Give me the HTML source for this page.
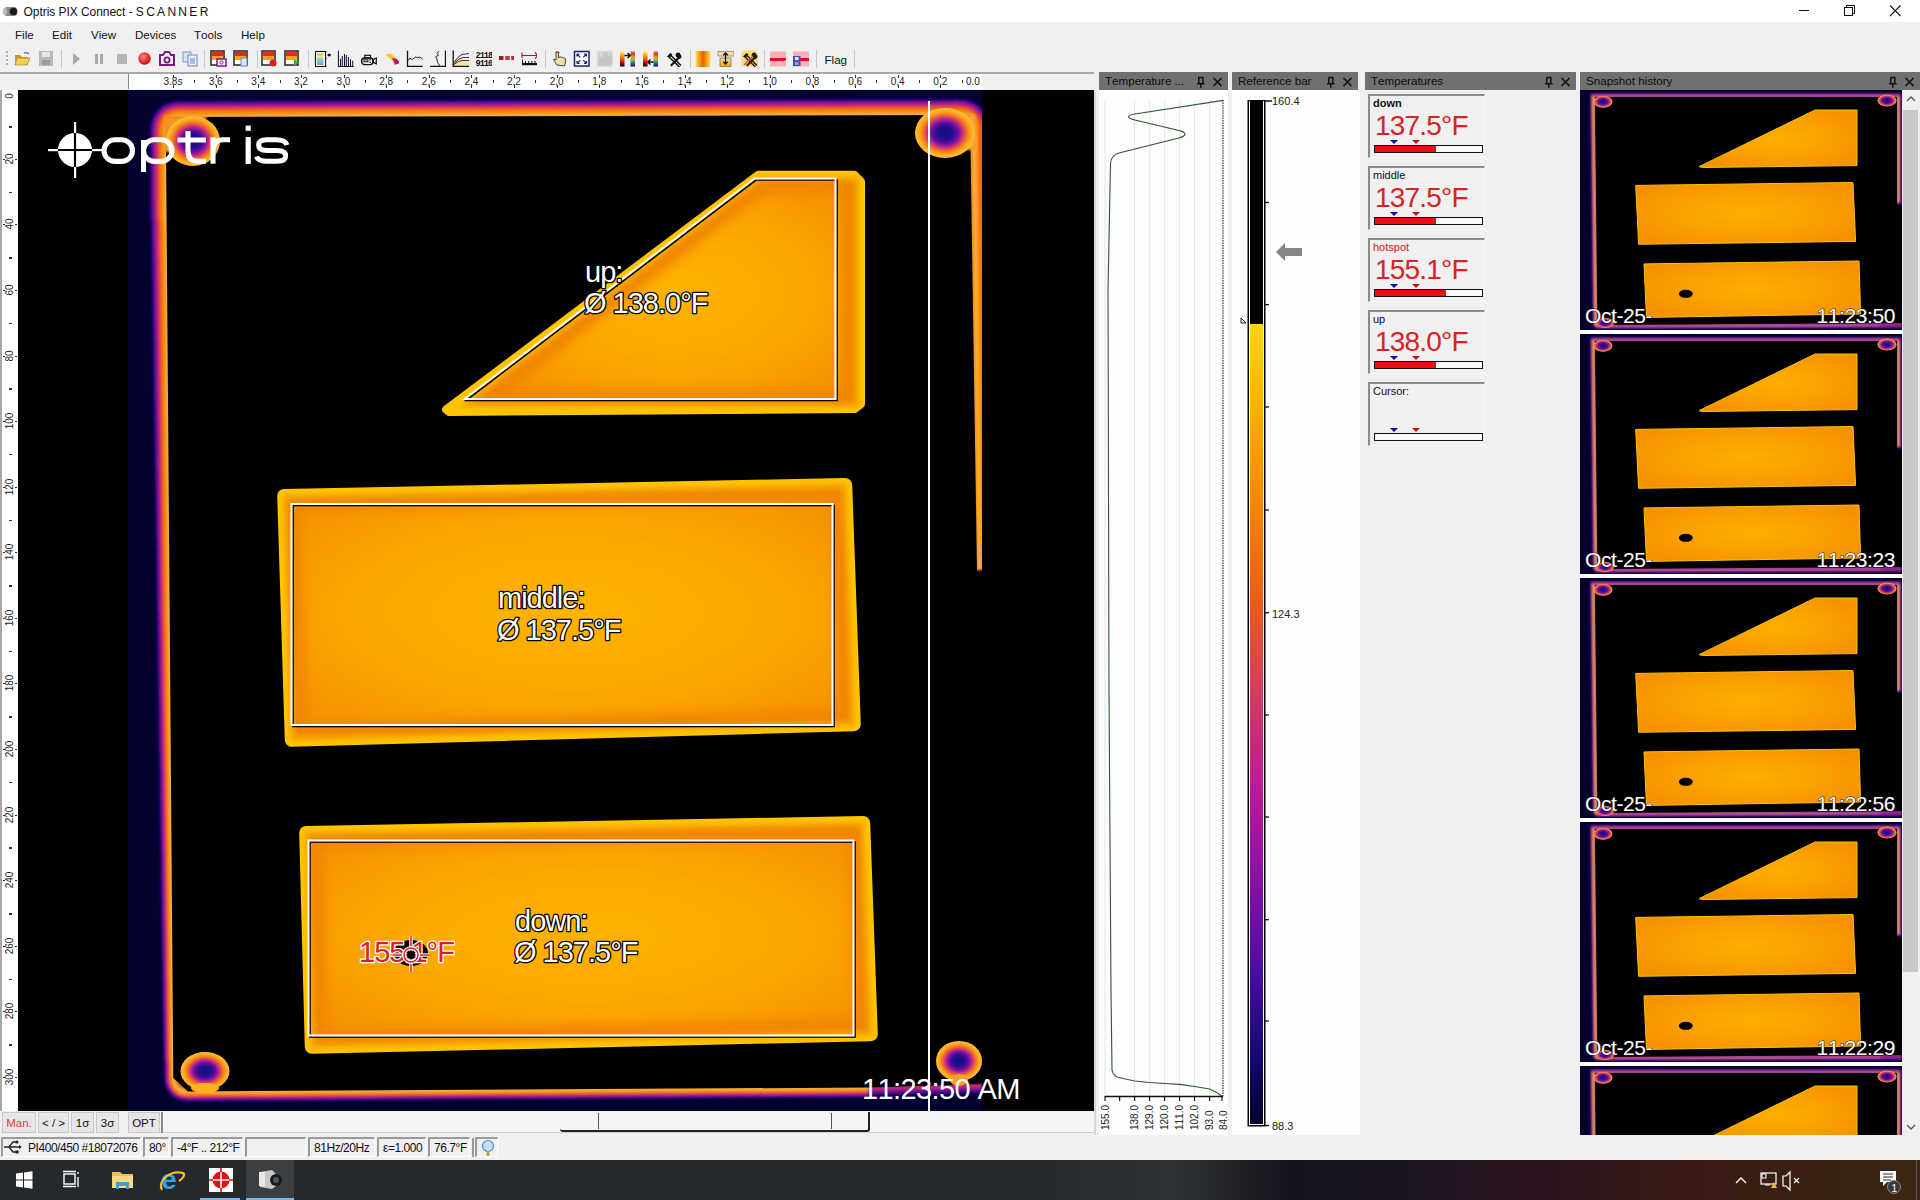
<!DOCTYPE html><html><head><meta charset="utf-8"><style>
*{box-sizing:border-box}
html,body{margin:0;padding:0}
body{width:1920px;height:1200px;overflow:hidden;position:relative;background:#f0f0f0;font-family:"Liberation Sans",sans-serif;color:#000;font-kerning:none}
.a{position:absolute}
.ph{position:absolute;top:72px;height:18px;background:#707070;color:#0d0d0d;font-size:11.6px;white-space:nowrap;overflow:hidden}
.ph .tx{position:absolute;left:6px;top:2px}
.rl{position:absolute;top:76px;font-size:10px;color:#222;white-space:nowrap}
.btn{position:absolute;top:1112px;height:21px;background:#e6e6e6;border:1px solid #c8c8c8;font-size:11.5px;text-align:center;line-height:21px;color:#111}
.sb{position:absolute;top:1137px;height:20px;border-top:2px solid #9a9a9a;border-left:2px solid #9a9a9a;border-right:1px solid #fdfdfd;border-bottom:1px solid #fdfdfd;font-size:12px;letter-spacing:-0.45px;line-height:19px;padding-left:4px;white-space:nowrap;color:#111}
.tbox{position:absolute;left:1368px;width:117px;height:64px;border-top:2px solid #8a8a8a;border-left:2px solid #8a8a8a;border-right:1px solid #fafafa;border-bottom:1px solid #fafafa;background:#f0f0f0}
.tbox .lb{position:absolute;left:3px;top:1px;font-size:11px;color:#111}
.tbox .val{position:absolute;left:5px;top:14px;font-size:28px;color:#d92128;letter-spacing:-0.8px}
.tbox .bar{position:absolute;left:4px;top:49px;width:109px;height:8px;border:1.5px solid #111;background:#f8f8f8}
.tbox .fill{position:absolute;left:0;top:0;height:100%;background:#e81010}
</style></head><body>
<div class="a" style="left:0;top:0;width:1920px;height:22px;background:#fff">
<svg class="a" style="left:2px;top:3px" width="18" height="16"><rect x="2" y="4" width="13" height="9" rx="3" fill="#8a8a8a"/><rect x="1" y="5" width="4" height="7" rx="2" fill="#bbb"/><circle cx="11.5" cy="8.5" r="3.8" fill="#1a1a1a"/></svg>
<div class="a" style="left:23.5px;top:5px;font-size:12px;white-space:nowrap;color:#111;letter-spacing:-0.05px">Optris PIX Connect - <span style="letter-spacing:2.3px">SCANNER</span></div>
<svg class="a" style="left:1780px;top:0" width="140" height="22">
<line x1="19" y1="10.5" x2="29" y2="10.5" stroke="#111" stroke-width="1"/>
<rect x="64.5" y="7.5" width="8" height="8" fill="none" stroke="#111"/><path d="M66.5 7.5V5.5h8v8h-2" fill="none" stroke="#111"/>
<path d="M110 5.5l10.5 10.5M120.5 5.5l-10.5 10.5" stroke="#111" stroke-width="1.1"/>
</svg></div>
<div class="a" style="left:0;top:22px;width:1920px;height:23px;background:#f0f0f0;font-size:11.6px;color:#111">
<span class="a" style="left:15px;top:6px">File</span>
<span class="a" style="left:52px;top:6px">Edit</span>
<span class="a" style="left:91px;top:6px">View</span>
<span class="a" style="left:135px;top:6px">Devices</span>
<span class="a" style="left:194px;top:6px">Tools</span>
<span class="a" style="left:241px;top:6px">Help</span>
</div>
<div class="a" style="left:0;top:45px;width:1094px;height:27px;background:#f0f0f0"></div><div class="a" style="left:6px;top:51px;width:2px;height:16px;background:repeating-linear-gradient(#b0b0b0 0 2px,transparent 2px 4px)"></div><svg class="a" style="left:14px;top:50px" width="17" height="17"><path d="M1 5h5l2 2h6v8H1z" fill="#c99a2e"/><path d="M3 8h13l-3 7H1z" fill="#f3cc5a" stroke="#b58a20" stroke-width="0.8"/><path d="M10 3a4 3 0 0 1 5 1" stroke="#4a6aa0" fill="none" stroke-width="1.2"/></svg><svg class="a" style="left:38px;top:50px" width="17" height="17"><rect x="1" y="1" width="14" height="15" fill="#b8b8b8"/><rect x="4" y="2" width="8" height="5" fill="#e6e6e6"/><rect x="4" y="10" width="8" height="5" fill="#9c9c9c"/></svg><div class="a" style="left:61px;top:50px;width:1px;height:18px;background:#c8c8c8"></div><svg class="a" style="left:70px;top:50px" width="17" height="17"><path d="M3 3l7 6-7 6z" fill="#a9a9a9"/></svg><svg class="a" style="left:92px;top:50px" width="17" height="17"><rect x="3" y="4" width="3" height="10" fill="#a8a8a8"/><rect x="8" y="4" width="3" height="10" fill="#a8a8a8"/></svg><svg class="a" style="left:115px;top:50px" width="17" height="17"><rect x="2" y="4" width="10" height="10" fill="#b4b4b4"/></svg><svg class="a" style="left:137px;top:50px" width="17" height="17"><defs><radialGradient id="rg" cx="40%" cy="35%" r="60%"><stop offset="0" stop-color="#ff8a80"/><stop offset="1" stop-color="#d01010"/></radialGradient></defs><circle cx="7.5" cy="8.5" r="6.2" fill="url(#rg)"/></svg><svg class="a" style="left:158px;top:50px" width="17" height="17"><path d="M2 5h3l2-3h4l2 3h3v10H2z" fill="none" stroke="#7a1a80" stroke-width="2"/><circle cx="9" cy="10" r="2.6" fill="none" stroke="#7a1a80" stroke-width="1.8"/></svg><svg class="a" style="left:182px;top:50px" width="17" height="17"><rect x="1" y="2" width="8" height="10" fill="#d8e4f4" stroke="#7a9ad0"/><rect x="6" y="5" width="9" height="11" fill="#e8f0fa" stroke="#6a8ac8"/><path d="M8 9h5M8 11h5M8 13h5" stroke="#6a8ac8"/></svg><div class="a" style="left:204px;top:50px;width:1px;height:18px;background:#c8c8c8"></div><svg class="a" style="left:210px;top:50px" width="17" height="17"><rect x="1" y="1" width="13" height="14" fill="#fff" stroke="#222" stroke-width="1.5"/><rect x="2" y="2" width="11" height="4" fill="#d83010"/><rect x="2" y="6" width="11" height="4" fill="#f8a020"/><rect x="7" y="9" width="9" height="7" fill="#fff" stroke="#7a1a80" stroke-width="1.5"/><circle cx="11.5" cy="12.5" r="1.6" fill="none" stroke="#7a1a80"/></svg><svg class="a" style="left:233px;top:50px" width="17" height="17"><rect x="1" y="1" width="13" height="14" fill="#fff" stroke="#222" stroke-width="1.5"/><rect x="2" y="2" width="11" height="4" fill="#d83010"/><rect x="2" y="6" width="11" height="4" fill="#f8a020"/><rect x="8" y="8" width="6" height="8" fill="#dde8f6" stroke="#6a8ac8"/></svg><div class="a" style="left:257px;top:50px;width:1px;height:18px;background:#c8c8c8"></div><svg class="a" style="left:261px;top:50px" width="17" height="17"><rect x="1" y="1" width="13" height="14" fill="#fff" stroke="#222" stroke-width="1.5"/><rect x="2" y="2" width="11" height="4" fill="#d83010"/><rect x="2" y="6" width="11" height="4" fill="#f8a020"/><circle cx="12" cy="13" r="3.5" fill="#e02020"/></svg><svg class="a" style="left:284px;top:50px" width="17" height="17"><rect x="1" y="1" width="13" height="14" fill="#fff" stroke="#222" stroke-width="1.5"/><rect x="2" y="2" width="11" height="4" fill="#d83010"/><rect x="2" y="6" width="11" height="4" fill="#f8a020"/><path d="M10 9l5 3.5-5 3.5z" fill="#20c020"/></svg><div class="a" style="left:308px;top:50px;width:1px;height:18px;background:#c8c8c8"></div><svg class="a" style="left:314px;top:50px" width="17" height="17"><defs><linearGradient id="rb" x1="0" y1="0" x2="0" y2="1"><stop offset="0" stop-color="#d8a070"/><stop offset="0.25" stop-color="#f0f080"/><stop offset="0.5" stop-color="#80e0a0"/><stop offset="0.75" stop-color="#80b0f0"/><stop offset="1" stop-color="#b080e0"/></linearGradient></defs><rect x="1.5" y="1.5" width="10" height="15" fill="#fff" stroke="#111" stroke-width="1.1"/><rect x="3" y="3.5" width="6.5" height="11.5" fill="url(#rb)"/><path d="M11.5 8.5H12.6M11.5 1.5H12.6M11.5 16.5H12.6" stroke="#111"/><path d="M13 5L15.5 3V4.2H17V5.8H15.5V7Z" fill="#111"/></svg><svg class="a" style="left:337px;top:50px" width="17" height="17"><path d="M1.4 0.7V16.4M3.5 8.7V16.4M5.3 6V16.4M7.5 4V16.4M9.3 4.9V16.4M11.4 7V16.4M13.5 8.9V16.4M15.7 10.8V16.4M1 16.4H16.7" stroke="#14143a" stroke-width="1.05"/></svg><svg class="a" style="left:360px;top:50px" width="17" height="17"><rect x="1.6" y="8" width="11.5" height="6.6" rx="3" fill="none" stroke="#111" stroke-width="1.4"/><rect x="4.8" y="5.3" width="5.7" height="2.6" fill="none" stroke="#111" stroke-width="1.2"/><path d="M13.2 9.5L16.3 8V13.8L13.2 12.4Z" fill="none" stroke="#111" stroke-width="1.2"/><rect x="3.9" y="9.8" width="4" height="2" fill="none" stroke="#111" stroke-width="1"/><circle cx="10" cy="9.7" r="0.8" fill="#111"/><circle cx="10" cy="12.2" r="0.8" fill="#111"/></svg><svg class="a" style="left:384px;top:50px" width="17" height="17"><defs><filter id="pb"><feGaussianBlur stdDeviation="0.7"/></filter></defs><g filter="url(#pb)"><path d="M1 4.5L7 3.5L12 8.5L9 11Z" fill="#f8c828"/><path d="M8 8L12.5 8.5L15 12.5L11 15Z" fill="#c82050"/><circle cx="13" cy="12" r="2" fill="#a02080"/></g></svg><svg class="a" style="left:406px;top:50px" width="17" height="17"><path d="M1.5 0.7V16.4H16.7" fill="none" stroke="#111" stroke-width="1.3"/><path d="M2.2 10.5L3.8 8.2L6.2 9.6L9.5 7L11.3 7.7L14.2 7L16.7 9.6" fill="none" stroke="#111" stroke-width="0.9"/></svg><svg class="a" style="left:429px;top:50px" width="17" height="17"><path d="M1 16.4H16.5V0.5" fill="none" stroke="#111" stroke-width="1.3"/><path d="M9.7 1.2L8 3.5L9.5 5.2L6.6 6.8L8 9L8.4 12L10.8 16.2" fill="none" stroke="#111" stroke-width="0.9"/></svg><svg class="a" style="left:452px;top:50px" width="17" height="17"><path d="M1.5 10.5Q6 8 10 10L17 10V16H1.5Z" fill="#fbe8a8"/><path d="M1.2 0.5V16.4H17.1" fill="none" stroke="#111" stroke-width="1.3"/><path d="M2 12.5Q6 6 10 4.5L17 3.5M2 13.5Q7 8 11 7.5L17 7.5M2 14.5Q7 10 11 10.5L17 10.5" fill="none" stroke="#222" stroke-width="0.9"/></svg><svg class="a" style="left:475px;top:50px" width="17" height="17"><text x="0.5" y="8" font-size="8.6" font-family="Liberation Mono" font-weight="bold" fill="#111" letter-spacing="-1">2118</text><text x="0.5" y="16" font-size="8.6" font-family="Liberation Mono" font-weight="bold" fill="#111" letter-spacing="-1">9110</text></svg><svg class="a" style="left:497px;top:50px" width="17" height="17"><rect x="2" y="6" width="4.5" height="4" fill="#9a1a2a"/><rect x="8.2" y="6" width="4.5" height="4" fill="#c83a3a"/><rect x="14.3" y="6" width="3.7" height="4" fill="#b02a3a"/></svg><svg class="a" style="left:520px;top:50px" width="17" height="17"><path d="M2 2.5V8M2 5.5H17.5M15 2.5L17.8 5.5L15 8.8" fill="none" stroke="#8a2040" stroke-width="1.1"/><rect x="2" y="13" width="16" height="2.2" fill="#111"/><path d="M2.5 9.5V13M5.5 11V13M8.7 11V13M11.8 11V13M15 11V13M17.6 9.5V13" stroke="#111" stroke-width="1"/></svg><div class="a" style="left:545px;top:50px;width:1px;height:18px;background:#c8c8c8"></div><svg class="a" style="left:551px;top:50px" width="17" height="17"><path d="M6 15c-2-3-4-5-3-6l2 1V3a1.2 1.2 0 0 1 2.4 0v5l1-1c1-.5 2 0 2 .5 1-.5 2 0 2 .5 1-.3 2 .3 2 1v4l-1 3z" fill="#f0dca0" stroke="#333" stroke-width="0.9"/><path d="M4 3a3 3 0 0 1 5 0" fill="none" stroke="#c04040" stroke-width="0.8"/></svg><svg class="a" style="left:573px;top:50px" width="17" height="17"><rect x="1.5" y="1.5" width="14.5" height="14.5" fill="#fff" stroke="#1a2070" stroke-width="1.5"/><path d="M4 4L7.3 7.3M4 4H6.5M4 4V6.5M13.5 4L10.2 7.3M13.5 4H11M13.5 4V6.5M4 13.5L7.3 10.2M4 13.5H6.5M4 13.5V11M13.5 13.5L10.2 10.2M13.5 13.5H11M13.5 13.5V11" stroke="#1a2070" stroke-width="1.2"/></svg><svg class="a" style="left:596px;top:50px" width="17" height="17"><defs><filter id="gb"><feGaussianBlur stdDeviation="0.8"/></filter></defs><g filter="url(#gb)"><rect x="1.5" y="1.5" width="15" height="15" fill="#c4c4c4"/><rect x="3" y="3" width="4" height="4" fill="#dedede"/><rect x="11" y="3" width="3" height="3" fill="#e0d0d0"/></g></svg><svg class="a" style="left:619px;top:50px" width="17" height="17"><defs><linearGradient id="p1" x1="0" y1="0" x2="0" y2="1"><stop offset="0" stop-color="#fff0a0"/><stop offset="0.2" stop-color="#f8c020"/><stop offset="0.55" stop-color="#e85010"/><stop offset="0.8" stop-color="#901010"/><stop offset="1" stop-color="#100010"/></linearGradient><linearGradient id="p2" x1="0" y1="0" x2="0" y2="1"><stop offset="0" stop-color="#f0a0b0"/><stop offset="0.2" stop-color="#d03040"/><stop offset="0.4" stop-color="#f0a020"/><stop offset="0.55" stop-color="#a0c020"/><stop offset="0.75" stop-color="#2080a0"/><stop offset="1" stop-color="#101060"/></linearGradient></defs><rect x="1" y="1" width="4.5" height="15.5" fill="url(#p1)"/><rect x="11.5" y="1" width="4.5" height="15.5" fill="url(#p2)"/><path d="M5.5 5.5H11M8.5 3L11.2 5.5L8.5 8" fill="none" stroke="#111" stroke-width="1.4"/></svg><svg class="a" style="left:642px;top:50px" width="17" height="17"><defs><linearGradient id="p1" x1="0" y1="0" x2="0" y2="1"><stop offset="0" stop-color="#fff0a0"/><stop offset="0.2" stop-color="#f8c020"/><stop offset="0.55" stop-color="#e85010"/><stop offset="0.8" stop-color="#901010"/><stop offset="1" stop-color="#100010"/></linearGradient><linearGradient id="p2" x1="0" y1="0" x2="0" y2="1"><stop offset="0" stop-color="#f0a0b0"/><stop offset="0.2" stop-color="#d03040"/><stop offset="0.4" stop-color="#f0a020"/><stop offset="0.55" stop-color="#a0c020"/><stop offset="0.75" stop-color="#2080a0"/><stop offset="1" stop-color="#101060"/></linearGradient></defs><rect x="1" y="1" width="4.5" height="15.5" fill="url(#p1)"/><rect x="11.5" y="1" width="4.5" height="15.5" fill="url(#p2)"/><path d="M11.5 12H6M8.5 9.5L5.8 12L8.5 14.5" fill="none" stroke="#111" stroke-width="1.4"/></svg><svg class="a" style="left:665px;top:50px" width="17" height="17"><path d="M2 6.5L5.5 3L7.5 4.5L4.5 8Z" fill="#111"/><path d="M5 4.5L16 15.5M4 7L14.5 17" stroke="#111" stroke-width="1.5"/><path d="M15.5 4.5A2.5 2.5 0 1 0 12.5 7.5L5 15L6.5 16.5L14 9A2.5 2.5 0 0 0 16.5 6Z" fill="#111"/></svg><div class="a" style="left:690px;top:50px;width:1px;height:18px;background:#c8c8c8"></div><svg class="a" style="left:694px;top:50px" width="17" height="17"><defs><linearGradient id="og2" x1="0" y1="0" x2="1" y2="0"><stop offset="0" stop-color="#fde070"/><stop offset="0.25" stop-color="#f8a010"/><stop offset="0.5" stop-color="#e86010"/><stop offset="0.75" stop-color="#f8a010"/><stop offset="1" stop-color="#fde070"/></linearGradient><filter id="ob"><feGaussianBlur stdDeviation="0.6"/></filter></defs><rect x="1.5" y="1" width="15" height="16" fill="url(#og2)" filter="url(#ob)"/></svg><svg class="a" style="left:717px;top:50px" width="17" height="17"><rect x="1" y="1.5" width="16" height="4.5" fill="#f4d8a8" stroke="#9a8870" stroke-width="0.8"/><defs><linearGradient id="tr" x1="0" y1="0" x2="0" y2="1"><stop offset="0" stop-color="#f8e890"/><stop offset="1" stop-color="#f0a010"/></linearGradient></defs><rect x="3" y="8" width="11" height="8.5" fill="url(#tr)" stroke="#8a7050" stroke-width="0.8"/><path d="M8.5 3V14M6.3 5.2L8.5 3L10.7 5.2M6.3 11.8L8.5 14L10.7 11.8" fill="none" stroke="#111" stroke-width="1.3"/></svg><svg class="a" style="left:741px;top:50px" width="17" height="17"><defs><filter id="yb"><feGaussianBlur stdDeviation="1.2"/></filter></defs><rect x="0" y="0" width="17" height="17" rx="5" fill="#fbd870" filter="url(#yb)"/><path d="M2 6.5L5.5 3L7.5 4.5L4.5 8Z" fill="#111"/><path d="M5 4.5L16 15.5M4 7L14.5 17" stroke="#3a1a10" stroke-width="1.5"/><path d="M15.5 4.5A2.5 2.5 0 1 0 12.5 7.5L5 15L6.5 16.5L14 9A2.5 2.5 0 0 0 16.5 6Z" fill="#2a1a10"/><path d="M3 15L12 6" stroke="#d05040" stroke-width="1.2"/></svg><div class="a" style="left:764px;top:50px;width:1px;height:18px;background:#c8c8c8"></div><svg class="a" style="left:769px;top:50px" width="17" height="17"><rect x="1" y="1.5" width="16" height="15" fill="#f5b0b8"/><path d="M1 8.5Q2.5 12 4 8.5Q5.5 12 7 8.5Q8.5 12 10 8.5Q11.5 12 13 8.5Q14.5 12 16 8.5V11H1Z" fill="#e01020"/><rect x="1" y="8" width="16" height="2" fill="#e01020"/></svg><svg class="a" style="left:792px;top:50px" width="17" height="17"><rect x="1" y="1.5" width="16" height="15" fill="#f5b0b8"/><rect x="8" y="8" width="9" height="3" fill="#e01020"/><rect x="1" y="6" width="7.5" height="10" fill="#4a52b0"/><rect x="3" y="7" width="3.5" height="3" fill="#e8e8f0"/><rect x="3" y="12" width="3.5" height="3" fill="#9098d8"/></svg><div class="a" style="left:816px;top:50px;width:1px;height:18px;background:#c8c8c8"></div><div class="a" style="left:824.5px;top:53px;font-size:11.6px;color:#111">Flag</div><div class="a" style="left:854px;top:50px;width:1px;height:18px;background:#c8c8c8"></div>
<div class="a" style="left:0;top:72px;width:1094px;height:2px;background:#a8a8a8"></div>
<div class="a" style="left:0;top:74px;width:1094px;height:16px;background:#f0f0f0"></div>
<div class="a" style="left:128px;top:74px;width:854px;height:15px;background:#fff;border-left:1.5px solid #888"></div>
<div class="rl" style="left:161.8px;width:22.4px;text-align:center">3.8s</div><div class="a" style="left:173.0px;top:75px;width:1px;height:3px;background:#333"></div><div class="a" style="left:173.0px;top:85px;width:1px;height:3px;background:#333"></div><div class="a" style="left:194.3px;top:80px;width:1px;height:3px;background:#333"></div><div class="rl" style="left:207.2px;width:16.8px;text-align:center">3,6</div><div class="a" style="left:215.6px;top:75px;width:1px;height:3px;background:#333"></div><div class="a" style="left:215.6px;top:85px;width:1px;height:3px;background:#333"></div><div class="a" style="left:236.9px;top:80px;width:1px;height:3px;background:#333"></div><div class="rl" style="left:249.9px;width:16.8px;text-align:center">3,4</div><div class="a" style="left:258.3px;top:75px;width:1px;height:3px;background:#333"></div><div class="a" style="left:258.3px;top:85px;width:1px;height:3px;background:#333"></div><div class="a" style="left:279.6px;top:80px;width:1px;height:3px;background:#333"></div><div class="rl" style="left:292.5px;width:16.8px;text-align:center">3,2</div><div class="a" style="left:300.9px;top:75px;width:1px;height:3px;background:#333"></div><div class="a" style="left:300.9px;top:85px;width:1px;height:3px;background:#333"></div><div class="a" style="left:322.2px;top:80px;width:1px;height:3px;background:#333"></div><div class="rl" style="left:335.1px;width:16.8px;text-align:center">3,0</div><div class="a" style="left:343.5px;top:75px;width:1px;height:3px;background:#333"></div><div class="a" style="left:343.5px;top:85px;width:1px;height:3px;background:#333"></div><div class="a" style="left:364.8px;top:80px;width:1px;height:3px;background:#333"></div><div class="rl" style="left:377.8px;width:16.8px;text-align:center">2,8</div><div class="a" style="left:386.1px;top:75px;width:1px;height:3px;background:#333"></div><div class="a" style="left:386.1px;top:85px;width:1px;height:3px;background:#333"></div><div class="a" style="left:407.4px;top:80px;width:1px;height:3px;background:#333"></div><div class="rl" style="left:420.4px;width:16.8px;text-align:center">2,6</div><div class="a" style="left:428.8px;top:75px;width:1px;height:3px;background:#333"></div><div class="a" style="left:428.8px;top:85px;width:1px;height:3px;background:#333"></div><div class="a" style="left:450.1px;top:80px;width:1px;height:3px;background:#333"></div><div class="rl" style="left:463.0px;width:16.8px;text-align:center">2,4</div><div class="a" style="left:471.4px;top:75px;width:1px;height:3px;background:#333"></div><div class="a" style="left:471.4px;top:85px;width:1px;height:3px;background:#333"></div><div class="a" style="left:492.7px;top:80px;width:1px;height:3px;background:#333"></div><div class="rl" style="left:505.6px;width:16.8px;text-align:center">2,2</div><div class="a" style="left:514.0px;top:75px;width:1px;height:3px;background:#333"></div><div class="a" style="left:514.0px;top:85px;width:1px;height:3px;background:#333"></div><div class="a" style="left:535.3px;top:80px;width:1px;height:3px;background:#333"></div><div class="rl" style="left:548.3px;width:16.8px;text-align:center">2,0</div><div class="a" style="left:556.7px;top:75px;width:1px;height:3px;background:#333"></div><div class="a" style="left:556.7px;top:85px;width:1px;height:3px;background:#333"></div><div class="a" style="left:578.0px;top:80px;width:1px;height:3px;background:#333"></div><div class="rl" style="left:590.9px;width:16.8px;text-align:center">1,8</div><div class="a" style="left:599.3px;top:75px;width:1px;height:3px;background:#333"></div><div class="a" style="left:599.3px;top:85px;width:1px;height:3px;background:#333"></div><div class="a" style="left:620.6px;top:80px;width:1px;height:3px;background:#333"></div><div class="rl" style="left:633.5px;width:16.8px;text-align:center">1,6</div><div class="a" style="left:641.9px;top:75px;width:1px;height:3px;background:#333"></div><div class="a" style="left:641.9px;top:85px;width:1px;height:3px;background:#333"></div><div class="a" style="left:663.2px;top:80px;width:1px;height:3px;background:#333"></div><div class="rl" style="left:676.2px;width:16.8px;text-align:center">1,4</div><div class="a" style="left:684.6px;top:75px;width:1px;height:3px;background:#333"></div><div class="a" style="left:684.6px;top:85px;width:1px;height:3px;background:#333"></div><div class="a" style="left:705.9px;top:80px;width:1px;height:3px;background:#333"></div><div class="rl" style="left:718.8px;width:16.8px;text-align:center">1,2</div><div class="a" style="left:727.2px;top:75px;width:1px;height:3px;background:#333"></div><div class="a" style="left:727.2px;top:85px;width:1px;height:3px;background:#333"></div><div class="a" style="left:748.5px;top:80px;width:1px;height:3px;background:#333"></div><div class="rl" style="left:761.4px;width:16.8px;text-align:center">1,0</div><div class="a" style="left:769.8px;top:75px;width:1px;height:3px;background:#333"></div><div class="a" style="left:769.8px;top:85px;width:1px;height:3px;background:#333"></div><div class="a" style="left:791.1px;top:80px;width:1px;height:3px;background:#333"></div><div class="rl" style="left:804.1px;width:16.8px;text-align:center">0,8</div><div class="a" style="left:812.5px;top:75px;width:1px;height:3px;background:#333"></div><div class="a" style="left:812.5px;top:85px;width:1px;height:3px;background:#333"></div><div class="a" style="left:833.8px;top:80px;width:1px;height:3px;background:#333"></div><div class="rl" style="left:846.7px;width:16.8px;text-align:center">0,6</div><div class="a" style="left:855.1px;top:75px;width:1px;height:3px;background:#333"></div><div class="a" style="left:855.1px;top:85px;width:1px;height:3px;background:#333"></div><div class="a" style="left:876.4px;top:80px;width:1px;height:3px;background:#333"></div><div class="rl" style="left:889.3px;width:16.8px;text-align:center">0,4</div><div class="a" style="left:897.7px;top:75px;width:1px;height:3px;background:#333"></div><div class="a" style="left:897.7px;top:85px;width:1px;height:3px;background:#333"></div><div class="a" style="left:919.0px;top:80px;width:1px;height:3px;background:#333"></div><div class="rl" style="left:931.9px;width:16.8px;text-align:center">0,2</div><div class="a" style="left:940.3px;top:75px;width:1px;height:3px;background:#333"></div><div class="a" style="left:940.3px;top:85px;width:1px;height:3px;background:#333"></div><div class="a" style="left:961.6px;top:80px;width:1px;height:3px;background:#333"></div><div class="rl" style="left:964.6px;width:16.8px;text-align:center">0.0</div>
<div class="a" style="left:0;top:90px;width:18px;height:1021px;background:#fff;border-left:2.5px solid #a8a8a8"></div>
<div class="a" style="left:-5px;top:90.0px;width:30px;height:12px;font-size:10px;line-height:12px;text-align:center;color:#222;transform:rotate(-90deg)">0</div><div class="a" style="left:9px;top:126.0px;width:3px;height:1.5px;background:#333"></div><div class="a" style="left:-5px;top:152.7px;width:30px;height:12px;font-size:10px;line-height:12px;text-align:center;color:#222;transform:rotate(-90deg)">20</div><div class="a" style="left:3px;top:158.7px;width:2px;height:1px;background:#333"></div><div class="a" style="left:15px;top:158.7px;width:2px;height:1px;background:#333"></div><div class="a" style="left:9px;top:191.5px;width:3px;height:1.5px;background:#333"></div><div class="a" style="left:-5px;top:218.3px;width:30px;height:12px;font-size:10px;line-height:12px;text-align:center;color:#222;transform:rotate(-90deg)">40</div><div class="a" style="left:3px;top:224.3px;width:2px;height:1px;background:#333"></div><div class="a" style="left:15px;top:224.3px;width:2px;height:1px;background:#333"></div><div class="a" style="left:9px;top:257.1px;width:3px;height:1.5px;background:#333"></div><div class="a" style="left:-5px;top:283.9px;width:30px;height:12px;font-size:10px;line-height:12px;text-align:center;color:#222;transform:rotate(-90deg)">60</div><div class="a" style="left:3px;top:289.9px;width:2px;height:1px;background:#333"></div><div class="a" style="left:15px;top:289.9px;width:2px;height:1px;background:#333"></div><div class="a" style="left:9px;top:322.7px;width:3px;height:1.5px;background:#333"></div><div class="a" style="left:-5px;top:349.5px;width:30px;height:12px;font-size:10px;line-height:12px;text-align:center;color:#222;transform:rotate(-90deg)">80</div><div class="a" style="left:3px;top:355.5px;width:2px;height:1px;background:#333"></div><div class="a" style="left:15px;top:355.5px;width:2px;height:1px;background:#333"></div><div class="a" style="left:9px;top:388.3px;width:3px;height:1.5px;background:#333"></div><div class="a" style="left:-5px;top:415.1px;width:30px;height:12px;font-size:10px;line-height:12px;text-align:center;color:#222;transform:rotate(-90deg)">100</div><div class="a" style="left:3px;top:421.1px;width:2px;height:1px;background:#333"></div><div class="a" style="left:15px;top:421.1px;width:2px;height:1px;background:#333"></div><div class="a" style="left:9px;top:453.9px;width:3px;height:1.5px;background:#333"></div><div class="a" style="left:-5px;top:480.7px;width:30px;height:12px;font-size:10px;line-height:12px;text-align:center;color:#222;transform:rotate(-90deg)">120</div><div class="a" style="left:3px;top:486.7px;width:2px;height:1px;background:#333"></div><div class="a" style="left:15px;top:486.7px;width:2px;height:1px;background:#333"></div><div class="a" style="left:9px;top:519.5px;width:3px;height:1.5px;background:#333"></div><div class="a" style="left:-5px;top:546.2px;width:30px;height:12px;font-size:10px;line-height:12px;text-align:center;color:#222;transform:rotate(-90deg)">140</div><div class="a" style="left:3px;top:552.2px;width:2px;height:1px;background:#333"></div><div class="a" style="left:15px;top:552.2px;width:2px;height:1px;background:#333"></div><div class="a" style="left:9px;top:585.0px;width:3px;height:1.5px;background:#333"></div><div class="a" style="left:-5px;top:611.8px;width:30px;height:12px;font-size:10px;line-height:12px;text-align:center;color:#222;transform:rotate(-90deg)">160</div><div class="a" style="left:3px;top:617.8px;width:2px;height:1px;background:#333"></div><div class="a" style="left:15px;top:617.8px;width:2px;height:1px;background:#333"></div><div class="a" style="left:9px;top:650.6px;width:3px;height:1.5px;background:#333"></div><div class="a" style="left:-5px;top:677.4px;width:30px;height:12px;font-size:10px;line-height:12px;text-align:center;color:#222;transform:rotate(-90deg)">180</div><div class="a" style="left:3px;top:683.4px;width:2px;height:1px;background:#333"></div><div class="a" style="left:15px;top:683.4px;width:2px;height:1px;background:#333"></div><div class="a" style="left:9px;top:716.2px;width:3px;height:1.5px;background:#333"></div><div class="a" style="left:-5px;top:743.0px;width:30px;height:12px;font-size:10px;line-height:12px;text-align:center;color:#222;transform:rotate(-90deg)">200</div><div class="a" style="left:3px;top:749.0px;width:2px;height:1px;background:#333"></div><div class="a" style="left:15px;top:749.0px;width:2px;height:1px;background:#333"></div><div class="a" style="left:9px;top:781.8px;width:3px;height:1.5px;background:#333"></div><div class="a" style="left:-5px;top:808.6px;width:30px;height:12px;font-size:10px;line-height:12px;text-align:center;color:#222;transform:rotate(-90deg)">220</div><div class="a" style="left:3px;top:814.6px;width:2px;height:1px;background:#333"></div><div class="a" style="left:15px;top:814.6px;width:2px;height:1px;background:#333"></div><div class="a" style="left:9px;top:847.4px;width:3px;height:1.5px;background:#333"></div><div class="a" style="left:-5px;top:874.2px;width:30px;height:12px;font-size:10px;line-height:12px;text-align:center;color:#222;transform:rotate(-90deg)">240</div><div class="a" style="left:3px;top:880.2px;width:2px;height:1px;background:#333"></div><div class="a" style="left:15px;top:880.2px;width:2px;height:1px;background:#333"></div><div class="a" style="left:9px;top:913.0px;width:3px;height:1.5px;background:#333"></div><div class="a" style="left:-5px;top:939.8px;width:30px;height:12px;font-size:10px;line-height:12px;text-align:center;color:#222;transform:rotate(-90deg)">260</div><div class="a" style="left:3px;top:945.8px;width:2px;height:1px;background:#333"></div><div class="a" style="left:15px;top:945.8px;width:2px;height:1px;background:#333"></div><div class="a" style="left:9px;top:978.6px;width:3px;height:1.5px;background:#333"></div><div class="a" style="left:-5px;top:1005.4px;width:30px;height:12px;font-size:10px;line-height:12px;text-align:center;color:#222;transform:rotate(-90deg)">280</div><div class="a" style="left:3px;top:1011.4px;width:2px;height:1px;background:#333"></div><div class="a" style="left:15px;top:1011.4px;width:2px;height:1px;background:#333"></div><div class="a" style="left:9px;top:1044.2px;width:3px;height:1.5px;background:#333"></div><div class="a" style="left:-5px;top:1071.0px;width:30px;height:12px;font-size:10px;line-height:12px;text-align:center;color:#222;transform:rotate(-90deg)">300</div><div class="a" style="left:3px;top:1077.0px;width:2px;height:1px;background:#333"></div><div class="a" style="left:15px;top:1077.0px;width:2px;height:1px;background:#333"></div>
<svg class="a" style="left:18px;top:90px" width="1076" height="1021" viewBox="18 90 1076 1021">
<defs>
<filter id="bl1" x="-5%" y="-5%" width="110%" height="110%"><feGaussianBlur stdDeviation="1.2"/></filter>
<filter id="bl4" x="-20%" y="-20%" width="140%" height="140%"><feGaussianBlur stdDeviation="6"/></filter>
<filter id="bl2" x="-20%" y="-20%" width="140%" height="140%"><feGaussianBlur stdDeviation="2.5"/></filter>
<filter id="bl05" x="-10%" y="-10%" width="120%" height="120%"><feGaussianBlur stdDeviation="0.6"/></filter>
<clipPath id="cp982"><rect x="18" y="90" width="964" height="1021"/></clipPath>
<radialGradient id="og" cx="50%" cy="50%" r="65%"><stop offset="0" stop-color="#ffb200"/><stop offset="0.5" stop-color="#fdaa00"/><stop offset="1" stop-color="#f59400"/></radialGradient>
<radialGradient id="hole" cx="50%" cy="50%" r="50%"><stop offset="0" stop-color="#1c0a84"/><stop offset="0.25" stop-color="#200a8a"/><stop offset="0.45" stop-color="#7010a4"/><stop offset="0.6" stop-color="#d0307a"/><stop offset="0.74" stop-color="#f27a18"/><stop offset="0.88" stop-color="#ffac24"/><stop offset="1" stop-color="#ffc030"/></radialGradient>
</defs>
<rect x="18" y="90" width="1076" height="1021" fill="#000"/>
<rect x="128" y="90" width="854" height="1021" fill="#03012d"/>
<g clip-path="url(#cp982)"><g filter="url(#bl1)" fill="none" stroke-linejoin="round" stroke-linecap="butt"><path d="M165.8 220 L165.8 131 Q165.8 116.5 180 116.5 L958 114.5 Q974 114.5 974 130 L980 570" stroke="#10065a" stroke-width="34"/><path d="M149.4 200 L162.7 1060 L175.7 1060 L169.4 200 Z" fill="#10065a" stroke="none"/><path d="M870 1088 L188 1092 Q173.5 1092 173.3 1076 L173.2 1040" stroke="#10065a" stroke-width="20"/><path d="M165.8 220 L165.8 131 Q165.8 116.5 180 116.5 L958 114.5 Q974 114.5 974 130 L980 570" stroke="#3a0888" stroke-width="30"/><path d="M151.4 200 L163.7 1060 L175.7 1060 L169.4 200 Z" fill="#3a0888" stroke="none"/><path d="M870 1088 L188 1092 Q173.5 1092 173.3 1076 L173.2 1040" stroke="#3a0888" stroke-width="18"/><path d="M165.8 220 L165.8 131 Q165.8 116.5 180 116.5 L958 114.5 Q974 114.5 974 130 L980 570" stroke="#8a1296" stroke-width="26"/><path d="M153.4 200 L165.2 1060 L175.7 1060 L169.4 200 Z" fill="#8a1296" stroke="none"/><path d="M870 1088 L188 1092 Q173.5 1092 173.3 1076 L173.2 1040" stroke="#8a1296" stroke-width="15"/><path d="M165.8 220 L165.8 131 Q165.8 116.5 180 116.5 L958 114.5 Q974 114.5 974 130 L980 570" stroke="#cc2c68" stroke-width="21"/><path d="M155.9 200 L166.7 1060 L175.7 1060 L169.4 200 Z" fill="#cc2c68" stroke="none"/><path d="M870 1088 L188 1092 Q173.5 1092 173.3 1076 L173.2 1040" stroke="#cc2c68" stroke-width="12"/><path d="M165.8 220 L165.8 131 Q165.8 116.5 180 116.5 L958 114.5 Q974 114.5 974 130 L980 570" stroke="#ee5818" stroke-width="16"/><path d="M158.4 200 L168.2 1060 L175.7 1060 L169.4 200 Z" fill="#ee5818" stroke="none"/><path d="M870 1088 L188 1092 Q173.5 1092 173.3 1076 L173.2 1040" stroke="#ee5818" stroke-width="9"/><path d="M165.8 220 L165.8 131 Q165.8 116.5 180 116.5 L958 114.5 Q974 114.5 974 130 L980 570" stroke="#f58a0c" stroke-width="11"/><path d="M160.9 200 L169.4 1060 L175.7 1060 L169.4 200 Z" fill="#f58a0c" stroke="none"/><path d="M870 1088 L188 1092 Q173.5 1092 173.3 1076 L173.2 1040" stroke="#f58a0c" stroke-width="6.5"/><path d="M165.8 220 L165.8 131 Q165.8 116.5 180 116.5 L958 114.5 Q974 114.5 974 130 L980 570" stroke="#f2b040" stroke-width="3.6"/><path d="M164.6 200 L171.2 1060 L175.7 1060 L169.4 200 Z" fill="#f2b040" stroke="none"/><path d="M870 1088 L188 1092 Q173.5 1092 173.3 1076 L173.2 1040" stroke="#f2b040" stroke-width="3"/><path d="M868 1088 L982 1085.5" stroke="#0e0650" stroke-width="20"/><path d="M868 1088 L982 1085.5" stroke="#3a0a88" stroke-width="14"/><path d="M868 1088 L982 1085.5" stroke="#8a1296" stroke-width="9"/><path d="M868 1088 L982 1085.5" stroke="#c02a70" stroke-width="4"/></g></g>
<path d="M165.8 117 L970 115 L977 572 L982 572 L982 1084 L870 1087.5 L188 1091.5 L173.3 1078 Z" fill="#000"/>
<g filter="url(#bl1)"><path d="M164 116 L208 116 L200 126 L176 152 L165 152 Z" fill="#f89424"/><path d="M925 114 L975 114 L977 150 L960 150 L925 125 Z" fill="#f8a030"/></g>
<g filter="url(#bl05)">
 <ellipse cx="193" cy="141" rx="27" ry="25" fill="url(#hole)"/>
 <ellipse cx="945" cy="133" rx="30" ry="25" fill="url(#hole)"/>
 <ellipse cx="205" cy="1071" rx="24.5" ry="19" fill="url(#hole)"/>
 <ellipse cx="959" cy="1061" rx="23" ry="20" fill="url(#hole)"/>
 <ellipse cx="205" cy="1088" rx="14" ry="5" fill="#ffb020"/>
 <ellipse cx="959" cy="1080" rx="9" ry="6" fill="#f8a020"/>
</g>
<g><path d="M446.1 409.5 L758.3 174.8 L854.3 174.8 L861.0 181.6 L861.0 404.0 L854.6 409.0 L449.3 412.0 Z" fill="#ffc400" stroke="#ffc400" stroke-width="8" stroke-linejoin="round" filter="url(#bl05)"/><path d="M284.2 495.9 L845.2 485.1 L853.8 724.2 L291.8 739.8 Z" fill="#ffc400" stroke="#ffc400" stroke-width="14" stroke-linejoin="round" filter="url(#bl05)"/><path d="M306.2 832.9 L863.2 823.1 L870.8 1034.2 L311.8 1046.8 Z" fill="#ffc400" stroke="#ffc400" stroke-width="14" stroke-linejoin="round" filter="url(#bl05)"/><path d="M459.2 407.0 L759.0 176.8 L859.0 176.8 L859.0 407.0 Z" fill="#f5a000" filter="url(#bl2)"/><path d="M283.2 494.9 L846.2 484.1 L854.8 725.2 L290.8 740.8 Z" fill="#f5a000" filter="url(#bl2)"/><path d="M305.2 831.9 L864.2 822.1 L871.8 1035.1 L310.8 1047.9 Z" fill="#f5a000" filter="url(#bl2)"/><path d="M473.9 402.0 L760.7 181.8 L854.0 181.8 L854.0 402.0 Z" fill="#f08400" filter="url(#bl2)"/><path d="M288.3 499.8 L841.4 489.2 L849.6 720.3 L295.7 735.7 Z" fill="#f08400" filter="url(#bl2)"/><path d="M310.3 836.8 L859.4 827.2 L866.6 1030.3 L315.7 1042.8 Z" fill="#f08400" filter="url(#bl2)"/><path d="M506.3 391.0 L764.5 192.8 L843.0 192.8 L843.0 391.0 Z" fill="url(#og)" filter="url(#bl4)"/><path d="M299.7 510.6 L830.8 500.4 L838.2 709.6 L306.3 724.4 Z" fill="url(#og)" filter="url(#bl4)"/><path d="M321.6 847.6 L848.8 838.4 L855.2 1019.5 L326.4 1031.5 Z" fill="url(#og)" filter="url(#bl4)"/></g>
<g fill="none" stroke-linejoin="miter">
 <path d="M466 400.5 L756 180 L837 180 L837 400.5 Z" stroke="#000" stroke-width="1.6"/>
 <path d="M464.5 399 L754.5 178.5 L835.5 178.5 L835.5 399 Z" stroke="#fff" stroke-width="2"/>
 <rect x="293" y="505.5" width="541" height="221" stroke="#000" stroke-width="1.6"/>
 <rect x="291.5" y="504" width="541" height="221" stroke="#fff" stroke-width="2"/>
 <rect x="310" y="842" width="545" height="195" stroke="#000" stroke-width="1.6"/>
 <rect x="308.5" y="840.5" width="545" height="195" stroke="#fff" stroke-width="2"/>
</g>
<line x1="929" y1="101" x2="929" y2="1111" stroke="#fff" stroke-width="2"/>
<g font-family="Liberation Sans" font-size="29" fill="#fff" stroke="#000" stroke-width="2.6" paint-order="stroke" stroke-linejoin="round" letter-spacing="-1">
 <text x="585" y="282">up:</text>
 <text x="584" y="313">&#216; 138.0&#176;F</text>
 <text x="498" y="608">middle:</text>
 <text x="497" y="640">&#216; 137.5&#176;F</text>
 <text x="515" y="931">down:</text>
 <text x="514" y="962">&#216; 137.5&#176;F</text>
 <text x="862" y="1099" stroke="none" letter-spacing="-0.6">11:23:50 AM</text>
</g>
<ellipse cx="411" cy="953" rx="17" ry="13" fill="#000" filter="url(#bl05)"/>
<text x="359" y="962" font-family="Liberation Sans" font-size="29" fill="#d8202a" stroke="#fff" stroke-width="2.4" paint-order="stroke" letter-spacing="-1">155.1&#176;F</text>
<g stroke="#fff" stroke-width="3.5"><line x1="411" y1="936" x2="411" y2="972"/><line x1="393" y1="955" x2="429" y2="955"/></g>
<g stroke="#d8202a" stroke-width="1.5"><line x1="411" y1="936" x2="411" y2="972"/><line x1="393" y1="955" x2="429" y2="955"/></g>
<circle cx="411" cy="955" r="7" fill="none" stroke="#fff" stroke-width="4"/>
<circle cx="411" cy="955" r="7" fill="none" stroke="#d8202a" stroke-width="1.5"/>
<circle cx="411" cy="955" r="4" fill="#000"/>
<g fill="#fff">
 <circle cx="75" cy="150" r="17"/>
 <rect x="48" y="149" width="55" height="2.2"/>
 <rect x="74" y="122" width="2.2" height="56"/>
</g>
<g stroke="#000" stroke-width="2.2"><line x1="58" y1="150" x2="92" y2="150"/><line x1="75" y1="133" x2="75" y2="167"/></g>
<g fill="none" stroke="#fff" stroke-width="5.1">
 <rect x="104" y="139.7" width="28.5" height="21.7" rx="11" ry="10.8"/>
 <rect x="143.5" y="139.7" width="28.5" height="21.7" rx="11" ry="10.8"/>
 <path d="M143.5 140V172"/>
 <path d="M188 131V151Q188 161.3 198 161.3H206M177.5 140H206"/>
 <path d="M213 137.3V163.7M213 152Q213 139.7 223 139.7H230"/>
 <path d="M287 145Q285.5 139.7 276 139.7H267Q258.7 139.7 258.7 145Q258.7 150.5 267 150.5H277Q285.6 150.5 285.6 156Q285.6 161.3 277 161.3H267Q258 161.3 256.5 156.5"/>
</g>
<rect x="245.6" y="137.1" width="5.2" height="26.8" fill="#fff"/><rect x="245.6" y="125.6" width="5.2" height="5.2" fill="#fff"/>
</svg>
<div class="a" style="left:0;top:1111px;width:1094px;height:24px;background:#f0f0f0"></div>
<div class="btn" style="left:2px;width:34px;color:#e04040">Man.</div>
<div class="btn" style="left:38px;width:31px;color:#111">&lt; / &gt;</div>
<div class="btn" style="left:71px;width:23px;color:#111">1&#963;</div>
<div class="btn" style="left:96px;width:23px;color:#111">3&#963;</div>
<div class="btn" style="left:128px;width:32px;color:#111">OPT</div>
<div class="a" style="left:161px;top:1112px;width:2px;height:21px;background:#8a8a8a"></div>
<div class="a" style="left:163px;top:1112px;width:931px;height:21px;background:#f4f4f4;border-bottom:1px solid #d0d0d0"></div>
<div class="a" style="left:560px;top:1112px;width:310px;height:20px;border-bottom:2px solid #222;border-right:2px solid #222;border-radius:0 0 3px 3px"></div>
<div class="a" style="left:598px;top:1113px;width:1px;height:16px;background:#555"></div><div class="a" style="left:831px;top:1113px;width:1px;height:16px;background:#555"></div>
<div class="a" style="left:1094px;top:90px;width:2px;height:1045px;background:#d8d8d8"></div>
<div class="a" style="left:0;top:1135px;width:1920px;height:25px;background:#f0f0f0"></div>
<div class="sb" style="left:1px;width:140px;padding-left:25px">PI400/450 #18072076</div>
<svg class="a" style="left:3px;top:1139px" width="20" height="16"><path d="M1 8h15M6 8l4-5h3M6 8l4 5h3" fill="none" stroke="#222" stroke-width="1.3"/><circle cx="14" cy="3" r="1.5" fill="#222"/><rect x="12.5" y="11.5" width="3" height="3" fill="#222"/><path d="M16 6l3 2-3 2z" fill="#222"/></svg>
<div class="sb" style="left:143px;width:26px">80&#176;</div>
<div class="sb" style="left:171px;width:72px">-4&#176;F .. 212&#176;F</div>
<div class="sb" style="left:245px;width:61px"></div>
<div class="sb" style="left:308px;width:67px">81Hz/20Hz</div>
<div class="sb" style="left:377px;width:49px">&#949;=1.000</div>
<div class="sb" style="left:428px;width:42px">76.7&#176;F</div>
<div class="a" style="left:472px;top:1138px;width:2px;height:19px;background:#999"></div>
<div class="sb" style="left:475px;width:23px"></div>
<svg class="a" style="left:478px;top:1139px" width="18" height="18"><circle cx="10" cy="7" r="5.5" fill="#bfe0f8" stroke="#4a8ab8" stroke-width="1.2"/><rect x="8.5" y="12" width="3" height="5" fill="#c0a040"/></svg>
<div class="a" style="left:0;top:1160px;width:1920px;height:40px;background:linear-gradient(90deg,#25292c 0%,#262a2d 55%,#2f3334 61%,#14141c 67%,#1a1420 73%,#2a1420 80%,#3a1a14 88%,#3a2212 96%,#3a2814 100%)"></div>
<svg class="a" style="left:0;top:1160px" width="320" height="40">
<path d="M16 13.5l7-1v7h-7zM24 12.4l8.5-1.2v8.3H24zM16 20.5h7v7l-7-1zM24 20.5h8.5v8.3L24 27.6z" fill="#fff"/>
<rect x="64" y="14" width="11" height="10" fill="none" stroke="#fff" stroke-width="1.4"/><path d="M63 11.5h13M63 26.5h13M78 12v2M78 17v10" stroke="#fff" stroke-width="1.3"/>
<path d="M112 12h8l2 2h11v13h-21z" fill="#e8c060"/><rect x="112" y="16" width="21" height="12" fill="#f8da80"/><path d="M116 29v-7h13v7h-3v-3h-7v3z" fill="#3aa0d8"/>
<text x="161" y="29" font-family="Liberation Sans" font-size="28" font-weight="bold" fill="#2ea6e6">e</text><path d="M162 30c-5-9 8-20 21-17c3 2-1 6-4 8" fill="none" stroke="#f0c030" stroke-width="2.2"/>
<rect x="209" y="8" width="24" height="24" fill="#fff"/><circle cx="221" cy="20" r="8.5" fill="#e01010"/><path d="M209 20h24M221 8v24" stroke="#e01010" stroke-width="1.6"/><path d="M213 20h16M221 12v16" stroke="#fff" stroke-width="1.6"/>
<rect x="246" y="0" width="48" height="40" fill="#3c3f42"/><rect x="200" y="38" width="40" height="2" fill="#76b9ed"/><rect x="246" y="38" width="48" height="2" fill="#76b9ed"/>
<path d="M260 12l12-2 4 4v12l-4 3-12-2z" fill="#c8c8c8"/><rect x="259" y="12" width="6" height="14" fill="#e8e8e8"/><circle cx="276" cy="20" r="6" fill="#1a1a1a"/><circle cx="276" cy="20" r="3" fill="#555"/>
</svg>
<svg class="a" style="left:1720px;top:1160px" width="200" height="40">
<path d="M16 23l5-5 5 5" fill="none" stroke="#fff" stroke-width="1.3"/>
<rect x="41" y="13" width="15" height="11" fill="none" stroke="#fff" stroke-width="1.2"/><rect x="42" y="14" width="4" height="4" fill="none" stroke="#fff"/><path d="M45 25h5" stroke="#fff"/><path d="M51 28l3-6 3 6z" fill="#f0c020"/>
<path d="M63 16h3l4-4v18l-4-4h-3z" fill="none" stroke="#fff" stroke-width="1.2"/><path d="M74 18l5 5M79 18l-5 5" stroke="#fff" stroke-width="1.2"/>
<path d="M160 11h16v11h-9l-4 4v-4h-3z" fill="#fff"/><path d="M163 14h10M163 17h10M163 20h8" stroke="#222" stroke-width="1"/>
<circle cx="174" cy="27" r="6.5" fill="#3a3a3a" stroke="#888"/><text x="171.5" y="31.5" font-size="10" font-family="Liberation Sans" fill="#fff">1</text>
<rect x="196" y="0" width="1" height="40" fill="#555"/>
</svg>
<div class="a" style="left:1096px;top:72px;width:824px;height:1063px;background:#f0f0f0"></div>
<div class="ph" style="left:1099px;width:129px"><span class="tx">Temperature ...</span></div>
<svg class="a" style="left:1196px;top:73px" width="32" height="16"><path d="M2.8 4V10.3M6.8 4V10.3M2.2 4.6H7.4M1 10.8H8.6M4.8 10.8V14.8" stroke="#111" stroke-width="1.5" fill="none"/><path d="M17.5 5l8 8M25.5 5l-8 8" stroke="#111" stroke-width="1.6"/></svg>
<div class="ph" style="left:1232px;width:126px"><span class="tx">Reference bar</span></div>
<svg class="a" style="left:1326px;top:73px" width="32" height="16"><path d="M2.8 4V10.3M6.8 4V10.3M2.2 4.6H7.4M1 10.8H8.6M4.8 10.8V14.8" stroke="#111" stroke-width="1.5" fill="none"/><path d="M17.5 5l8 8M25.5 5l-8 8" stroke="#111" stroke-width="1.6"/></svg>
<div class="ph" style="left:1365px;width:211px"><span class="tx">Temperatures</span></div>
<svg class="a" style="left:1544px;top:73px" width="32" height="16"><path d="M2.8 4V10.3M6.8 4V10.3M2.2 4.6H7.4M1 10.8H8.6M4.8 10.8V14.8" stroke="#111" stroke-width="1.5" fill="none"/><path d="M17.5 5l8 8M25.5 5l-8 8" stroke="#111" stroke-width="1.6"/></svg>
<div class="ph" style="left:1580px;width:340px"><span class="tx">Snapshot history</span></div>
<svg class="a" style="left:1888px;top:73px" width="32" height="16"><path d="M2.8 4V10.3M6.8 4V10.3M2.2 4.6H7.4M1 10.8H8.6M4.8 10.8V14.8" stroke="#111" stroke-width="1.5" fill="none"/><path d="M17.5 5l8 8M25.5 5l-8 8" stroke="#111" stroke-width="1.6"/></svg>
<div class="a" style="left:1099px;top:90px;width:129px;height:1045px;background:#fdfdfd"></div>
<svg class="a" style="left:1099px;top:90px" width="129" height="1045"><line x1="6" y1="10" x2="6" y2="1006" stroke="#e6e6e6" stroke-width="1"/><line x1="35.6" y1="10" x2="35.6" y2="1006" stroke="#e6e6e6" stroke-width="1"/><line x1="50.6" y1="10" x2="50.6" y2="1006" stroke="#e6e6e6" stroke-width="1"/><line x1="65.6" y1="10" x2="65.6" y2="1006" stroke="#e6e6e6" stroke-width="1"/><line x1="80.6" y1="10" x2="80.6" y2="1006" stroke="#e6e6e6" stroke-width="1"/><line x1="95.6" y1="10" x2="95.6" y2="1006" stroke="#e6e6e6" stroke-width="1"/><line x1="110.6" y1="10" x2="110.6" y2="1006" stroke="#e6e6e6" stroke-width="1"/><line x1="124" y1="10" x2="124" y2="1006" stroke="#111" stroke-width="1" stroke-dasharray="1.5 1"/><path d="M124 10.4 L36 24 Q23 26.3 36 30 L82 41 Q91 44.5 80 48 L20 63 Q12.5 65 11.5 73 L9 200 L10 600 L12 900 L13 980 Q14 987 22 988 L35.6 991 L50.6 992.5 L65.6 993.5 L80.6 994.4 L95.6 996.5 L110.6 999 Q118 1002 124 1007" fill="none" stroke="#2a5a2a" stroke-width="1.1"/><path d="M6 1006.5H124" stroke="#111" stroke-width="1.5"/><line x1="6" y1="1006" x2="6" y2="1011" stroke="#111" stroke-width="1.2"/><line x1="20.6" y1="1006" x2="20.6" y2="1011" stroke="#111" stroke-width="1.2"/><line x1="35.6" y1="1006" x2="35.6" y2="1011" stroke="#111" stroke-width="1.2"/><line x1="50.6" y1="1006" x2="50.6" y2="1011" stroke="#111" stroke-width="1.2"/><line x1="65.6" y1="1006" x2="65.6" y2="1011" stroke="#111" stroke-width="1.2"/><line x1="80.6" y1="1006" x2="80.6" y2="1011" stroke="#111" stroke-width="1.2"/><line x1="95.6" y1="1006" x2="95.6" y2="1011" stroke="#111" stroke-width="1.2"/><line x1="110.6" y1="1006" x2="110.6" y2="1011" stroke="#111" stroke-width="1.2"/><line x1="123" y1="1006" x2="123" y2="1011" stroke="#111" stroke-width="1.2"/><text transform="translate(9.5,1040) rotate(-90)" font-family="Liberation Sans" font-size="10" fill="#222" text-anchor="start" style="font-kerning:none">155.0</text><text transform="translate(39.1,1040) rotate(-90)" font-family="Liberation Sans" font-size="10" fill="#222" text-anchor="start" style="font-kerning:none">138.0</text><text transform="translate(54.1,1040) rotate(-90)" font-family="Liberation Sans" font-size="10" fill="#222" text-anchor="start" style="font-kerning:none">129.0</text><text transform="translate(69.1,1040) rotate(-90)" font-family="Liberation Sans" font-size="10" fill="#222" text-anchor="start" style="font-kerning:none">120.0</text><text transform="translate(84.1,1040) rotate(-90)" font-family="Liberation Sans" font-size="10" fill="#222" text-anchor="start" style="font-kerning:none">111.0</text><text transform="translate(99.1,1040) rotate(-90)" font-family="Liberation Sans" font-size="10" fill="#222" text-anchor="start" style="font-kerning:none">102.0</text><text transform="translate(114.1,1040) rotate(-90)" font-family="Liberation Sans" font-size="10" fill="#222" text-anchor="start" style="font-kerning:none">93.0</text><text transform="translate(127.5,1040) rotate(-90)" font-family="Liberation Sans" font-size="10" fill="#222" text-anchor="start" style="font-kerning:none">84.0</text></svg>
<div class="a" style="left:1232px;top:90px;width:128px;height:1045px;background:#fdfdfd"></div>
<svg class="a" style="left:1232px;top:90px" width="128" height="1045"><defs><linearGradient id="iron" x1="0" y1="0" x2="0" y2="1"><stop offset="0" stop-color="#000"/><stop offset="0.2178" stop-color="#000"/><stop offset="0.2179" stop-color="#ffd418"/><stop offset="0.30" stop-color="#ffb000"/><stop offset="0.40" stop-color="#fb8200"/><stop offset="0.49" stop-color="#ee5a18"/><stop offset="0.58" stop-color="#d63a60"/><stop offset="0.67" stop-color="#c0189a"/><stop offset="0.76" stop-color="#8a10a8"/><stop offset="0.85" stop-color="#4a0ea0"/><stop offset="0.93" stop-color="#160878"/><stop offset="1" stop-color="#04002c"/></linearGradient></defs><rect x="15.5" y="10" width="18" height="1026.5" fill="#000"/><rect x="17" y="11" width="15" height="1024" fill="#fff"/><rect x="18" y="11" width="13" height="1023" fill="url(#iron)"/><path d="M33 11h7" stroke="#111" stroke-width="1.5"/><path d="M33 112.5h4" stroke="#111" stroke-width="1.3"/><path d="M33 214.6h4" stroke="#111" stroke-width="1.3"/><path d="M33 317h4" stroke="#111" stroke-width="1.3"/><path d="M33 420h4" stroke="#111" stroke-width="1.3"/><path d="M33 522.7h4" stroke="#111" stroke-width="1.3"/><path d="M33 625h4" stroke="#111" stroke-width="1.3"/><path d="M33 727h4" stroke="#111" stroke-width="1.3"/><path d="M33 829.7h4" stroke="#111" stroke-width="1.3"/><path d="M33 931h4" stroke="#111" stroke-width="1.3"/><path d="M33 1035.5h4" stroke="#111" stroke-width="1.3"/><text x="40" y="15" font-family="Liberation Sans" font-size="11" fill="#222">160.4</text><text x="40" y="528" font-family="Liberation Sans" font-size="11" fill="#222">124.3</text><text x="40" y="1040" font-family="Liberation Sans" font-size="11" fill="#222">88.3</text><path d="M44 162l9-9v5h17v8H53v5z" fill="#858585"/><path d="M9 228l5 5h-5z" fill="none" stroke="#222" stroke-width="1"/></svg>
<div class="tbox" style="top:94px"><div class="lb" style="color:#111;font-weight:bold">down</div><div class="val">137.5&#176;F</div><div class="bar"><div class="fill" style="width:57%"></div></div><svg class="a" style="left:20px;top:44px" width="40" height="6"><path d="M0 0h8l-4 4z" fill="#1010a0"/><path d="M22 0h8l-4 4z" fill="#c02020"/></svg></div>
<div class="tbox" style="top:166px"><div class="lb" style="color:#111;font-weight:normal">middle</div><div class="val">137.5&#176;F</div><div class="bar"><div class="fill" style="width:57%"></div></div><svg class="a" style="left:20px;top:44px" width="40" height="6"><path d="M0 0h8l-4 4z" fill="#1010a0"/><path d="M22 0h8l-4 4z" fill="#c02020"/></svg></div>
<div class="tbox" style="top:238px"><div class="lb" style="color:#d02020;font-weight:normal">hotspot</div><div class="val">155.1&#176;F</div><div class="bar"><div class="fill" style="width:66%"></div></div><svg class="a" style="left:20px;top:44px" width="40" height="6"><path d="M0 0h8l-4 4z" fill="#1010a0"/><path d="M22 0h8l-4 4z" fill="#c02020"/></svg></div>
<div class="tbox" style="top:310px"><div class="lb" style="color:#111;font-weight:normal">up</div><div class="val">138.0&#176;F</div><div class="bar"><div class="fill" style="width:57%"></div></div><svg class="a" style="left:20px;top:44px" width="40" height="6"><path d="M0 0h8l-4 4z" fill="#1010a0"/><path d="M22 0h8l-4 4z" fill="#c02020"/></svg></div>
<div class="tbox" style="top:382px"><div class="lb" style="color:#111;font-weight:normal">Cursor:</div><div class="val"></div><div class="bar"><div class="fill" style="width:0%"></div></div><svg class="a" style="left:20px;top:44px" width="40" height="6"><path d="M0 0h8l-4 4z" fill="#1010a0"/><path d="M22 0h8l-4 4z" fill="#c02020"/></svg></div>
<div class="a" style="left:1580px;top:90px;width:322px;height:1045px;background:#fff"></div>
<svg width="0" height="0" style="position:absolute"><defs>
<filter id="tbl" x="-5%" y="-5%" width="110%" height="110%"><feGaussianBlur stdDeviation="0.8"/></filter>
<radialGradient id="tog" cx="50%" cy="50%" r="60%"><stop offset="0" stop-color="#ffb000"/><stop offset="1" stop-color="#f59200"/></radialGradient>
<radialGradient id="thole" cx="50%" cy="50%" r="50%"><stop offset="0" stop-color="#1a0a80"/><stop offset="0.5" stop-color="#5010a0"/><stop offset="0.75" stop-color="#e04060"/><stop offset="1" stop-color="#ffb020"/></radialGradient>
<g id="thumb">
<rect x="0" y="0" width="322" height="240" fill="#04022c"/>
<g filter="url(#tbl)" fill="none">
<path d="M15.5 236 L13 6 L318.5 6 L318.5 114 M15.5 236 L322 235" stroke="#3a0c8a" stroke-width="6"/>
<path d="M15.5 236 L13 6 L318.5 6 L318.5 114 M15.5 236 L322 235" stroke="#a02890" stroke-width="3.5"/>
<path d="M13.5 7 L16 236 M318 7 L318 112" stroke="#f8a040" stroke-width="2.5"/>
<path d="M13 6 L318.5 6 M15.5 236 L300 235" stroke="#e07a90" stroke-width="1.2"/>
</g>
<path d="M15 7 L317 7 L317 114 L322 118 L322 233 L17.5 235 Z" fill="#000"/>
<ellipse cx="23" cy="11.7" rx="9.5" ry="6" fill="url(#thole)"/>
<ellipse cx="307" cy="10.6" rx="9.5" ry="6" fill="url(#thole)"/>
<ellipse cx="25" cy="233" rx="9" ry="5" fill="url(#thole)"/>
<path d="M119 76.7 L235 20 L277 20 L277 75.6 L123 77.5 Z" fill="url(#tog)" stroke="#ffc000" stroke-width="1"/>
<path d="M55.7 95.4 L273 92.5 L275.6 151.4 L58.6 154.3 Z" fill="url(#tog)" stroke="#ffc000" stroke-width="1"/>
<path d="M64 173.9 L279 171 L280.6 224 L66.5 227.4 Z" fill="url(#tog)" stroke="#ffc000" stroke-width="1"/>
<ellipse cx="105.8" cy="203.8" rx="7" ry="4" fill="#000"/>
</g></defs></svg>
<svg class="a" style="left:1580px;top:90px" width="322" height="240" viewBox="0 0 322 240" preserveAspectRatio="xMinYMin slice"><use href="#thumb"/></svg><svg class="a" style="left:1580px;top:334px" width="322" height="240" viewBox="0 0 322 240" preserveAspectRatio="xMinYMin slice"><use href="#thumb"/></svg><svg class="a" style="left:1580px;top:578px" width="322" height="240" viewBox="0 0 322 240" preserveAspectRatio="xMinYMin slice"><use href="#thumb"/></svg><svg class="a" style="left:1580px;top:822px" width="322" height="240" viewBox="0 0 322 240" preserveAspectRatio="xMinYMin slice"><use href="#thumb"/></svg><svg class="a" style="left:1580px;top:1066px" width="322" height="69" viewBox="0 0 322 240" preserveAspectRatio="xMinYMin slice"><use href="#thumb"/></svg>
<svg class="a" style="left:1580px;top:300px" width="322" height="30"><g font-family="Liberation Sans" font-size="21" fill="#fff" stroke="#1a1010" stroke-width="1" paint-order="stroke"><text x="5" y="23.2" letter-spacing="-0.4">Oct-25-</text><text x="315" y="23.2" text-anchor="end" letter-spacing="-0.4">11:23:50</text></g></svg>
<svg class="a" style="left:1580px;top:544px" width="322" height="30"><g font-family="Liberation Sans" font-size="21" fill="#fff" stroke="#1a1010" stroke-width="1" paint-order="stroke"><text x="5" y="23.2" letter-spacing="-0.4">Oct-25-</text><text x="315" y="23.2" text-anchor="end" letter-spacing="-0.4">11:23:23</text></g></svg>
<svg class="a" style="left:1580px;top:788px" width="322" height="30"><g font-family="Liberation Sans" font-size="21" fill="#fff" stroke="#1a1010" stroke-width="1" paint-order="stroke"><text x="5" y="23.2" letter-spacing="-0.4">Oct-25-</text><text x="315" y="23.2" text-anchor="end" letter-spacing="-0.4">11:22:56</text></g></svg>
<svg class="a" style="left:1580px;top:1032px" width="322" height="30"><g font-family="Liberation Sans" font-size="21" fill="#fff" stroke="#1a1010" stroke-width="1" paint-order="stroke"><text x="5" y="23.2" letter-spacing="-0.4">Oct-25-</text><text x="315" y="23.2" text-anchor="end" letter-spacing="-0.4">11:22:29</text></g></svg>
<div class="a" style="left:1580px;top:330px;width:322px;height:4px;background:#fff"></div>
<div class="a" style="left:1580px;top:574px;width:322px;height:4px;background:#fff"></div>
<div class="a" style="left:1580px;top:818px;width:322px;height:4px;background:#fff"></div>
<div class="a" style="left:1580px;top:1062px;width:322px;height:4px;background:#fff"></div>
<div class="a" style="left:1902px;top:90px;width:18px;height:1045px;background:#f0f0f0"></div>
<div class="a" style="left:1903px;top:110px;width:15px;height:862px;background:#c8c8c8"></div>
<svg class="a" style="left:1902px;top:92px" width="18" height="14"><path d="M5 9l4-4 4 4" fill="none" stroke="#555" stroke-width="1.3"/></svg>
<svg class="a" style="left:1902px;top:1120px" width="18" height="14"><path d="M5 5l4 4 4-4" fill="none" stroke="#555" stroke-width="1.3"/></svg>
</body></html>
